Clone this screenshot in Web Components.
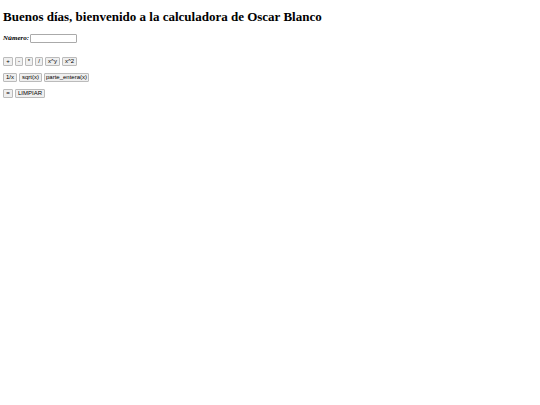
<!DOCTYPE html>
<html lang="es">
<head>
<meta charset="utf-8">
<title>Calculadora</title>
<style>
body {
  margin: 0;
  padding: 9px 3px;
  background: #fff;
  color: #000;
  font-family: "Liberation Serif", "Times New Roman", serif;
}
</style>
</head>
<body>
<app-calculator owner="Oscar Blanco"></app-calculator>

<script>
/* Button */
const calcButtonTemplate = document.createElement('template')

calcButtonTemplate.innerHTML = `
<style>
:host {
  display: block;
}
button {
  display: block;
  box-sizing: border-box;
  width: var(--key-width, 10px);
  height: 9px;
  padding: 0;
  border: 1px solid #bbb;
  border-radius: 1px;
  background: #efefef;
  color: #000;
  font: 6px/7px "Liberation Sans", Arial, sans-serif;
  text-align: center;
  white-space: nowrap;
}
button:active {
  background: #ddd;
}
</style>
<button type="button"><slot></slot></button>
`

class CalcButton extends HTMLElement {
  constructor() {
    super()
    const shadowRoot = this.attachShadow({ mode: 'open' })
    shadowRoot.appendChild(calcButtonTemplate.content.cloneNode(true))
  }
}

customElements.define('calc-button', CalcButton)

/* Row of buttons */
const calcRowTemplate = document.createElement('template')

calcRowTemplate.innerHTML = `
<style>
:host {
  display: flex;
  flex-wrap: wrap;
  gap: 2px;
}
</style>
<slot></slot>
`

class CalcRow extends HTMLElement {
  constructor() {
    super()
    const shadowRoot = this.attachShadow({ mode: 'open' })
    shadowRoot.appendChild(calcRowTemplate.content.cloneNode(true))
  }
}

customElements.define('calc-row', CalcRow)

/* Number field */
const numberFieldTemplate = document.createElement('template')

numberFieldTemplate.innerHTML = `
<style>
:host {
  display: flex;
  align-items: center;
  gap: 1px;
}
label {
  font-size: 7px;
  line-height: 9px;
  font-weight: bold;
  font-style: italic;
}
input {
  box-sizing: border-box;
  width: 47px;
  height: 9px;
  padding: 0 1px;
  border: 1px solid #aaa;
  border-radius: 1px;
  background: #fff;
  font: 6px/7px "Liberation Sans", Arial, sans-serif;
}
</style>
<label for="numero"><slot></slot></label>
<input id="numero" type="text">
`

class NumberField extends HTMLElement {
  constructor() {
    super()
    const shadowRoot = this.attachShadow({ mode: 'open' })
    shadowRoot.appendChild(numberFieldTemplate.content.cloneNode(true))
    this.input = shadowRoot.querySelector('input')
  }

  get value() {
    return this.input.value
  }

  set value(v) {
    this.input.value = v
  }
}

customElements.define('number-field', NumberField)

/* Calculator */
const calculatorTemplate = document.createElement('template')

calculatorTemplate.innerHTML = `
<style>
:host {
  display: block;
}
h1 {
  margin: 0 0 10px;
  font-size: 13px;
  line-height: 15px;
}
.keys {
  display: grid;
  gap: 7px;
  margin-top: 14px;
}
.tiny { --key-width: 8px; }
.small { --key-width: 14px; }
.medium { --key-width: 15px; }
.root { --key-width: 23px; }
.clear { --key-width: 30px; }
.wide { --key-width: 45px; }
</style>
<h1></h1>
<number-field>Número:</number-field>
<div class="keys">
  <calc-row>
    <calc-button data-op="+">+</calc-button>
    <calc-button class="tiny" data-op="-">-</calc-button>
    <calc-button class="tiny" data-op="*">*</calc-button>
    <calc-button class="tiny" data-op="/">/</calc-button>
    <calc-button class="medium" data-op="pow">x^y</calc-button>
    <calc-button class="medium" data-op="square">x^2</calc-button>
  </calc-row>
  <calc-row>
    <calc-button class="small" data-op="inverse">1/x</calc-button>
    <calc-button class="root" data-op="sqrt">sqrt(x)</calc-button>
    <calc-button class="wide" data-op="int">parte_entera(x)</calc-button>
  </calc-row>
  <calc-row>
    <calc-button data-op="equals">=</calc-button>
    <calc-button class="clear" data-op="clear">LIMPIAR</calc-button>
  </calc-row>
</div>
`

const binary = {
  '+': (a, b) => a + b,
  '-': (a, b) => a - b,
  '*': (a, b) => a * b,
  '/': (a, b) => a / b,
  pow: (a, b) => a ** b
}

const unary = {
  square: x => x * x,
  inverse: x => 1 / x,
  sqrt: x => Math.sqrt(x),
  int: x => Math.trunc(x)
}

class AppCalculator extends HTMLElement {
  constructor() {
    super()
    const shadowRoot = this.attachShadow({ mode: 'open' })
    shadowRoot.appendChild(calculatorTemplate.content.cloneNode(true))
    this.field = shadowRoot.querySelector('number-field')
    this.pending = null
  }

  connectedCallback() {
    const owner = this.getAttribute('owner')
    this.shadowRoot.querySelector('h1').textContent =
      `Buenos días, bienvenido a la calculadora de ${owner}`
    this.shadowRoot.querySelectorAll('calc-button').forEach(key => {
      key.addEventListener('click', () => this.press(key.dataset.op))
    })
  }

  press(op) {
    const x = Number(this.field.value)
    if (unary[op]) {
      this.field.value = unary[op](x)
    } else if (binary[op]) {
      this.pending = { op, x }
      this.field.value = ''
    } else if (op === 'clear') {
      this.pending = null
      this.field.value = ''
    } else if (this.pending) {
      this.field.value = binary[this.pending.op](this.pending.x, x)
      this.pending = null
    }
  }
}

customElements.define('app-calculator', AppCalculator)
</script>
</body>
</html>
